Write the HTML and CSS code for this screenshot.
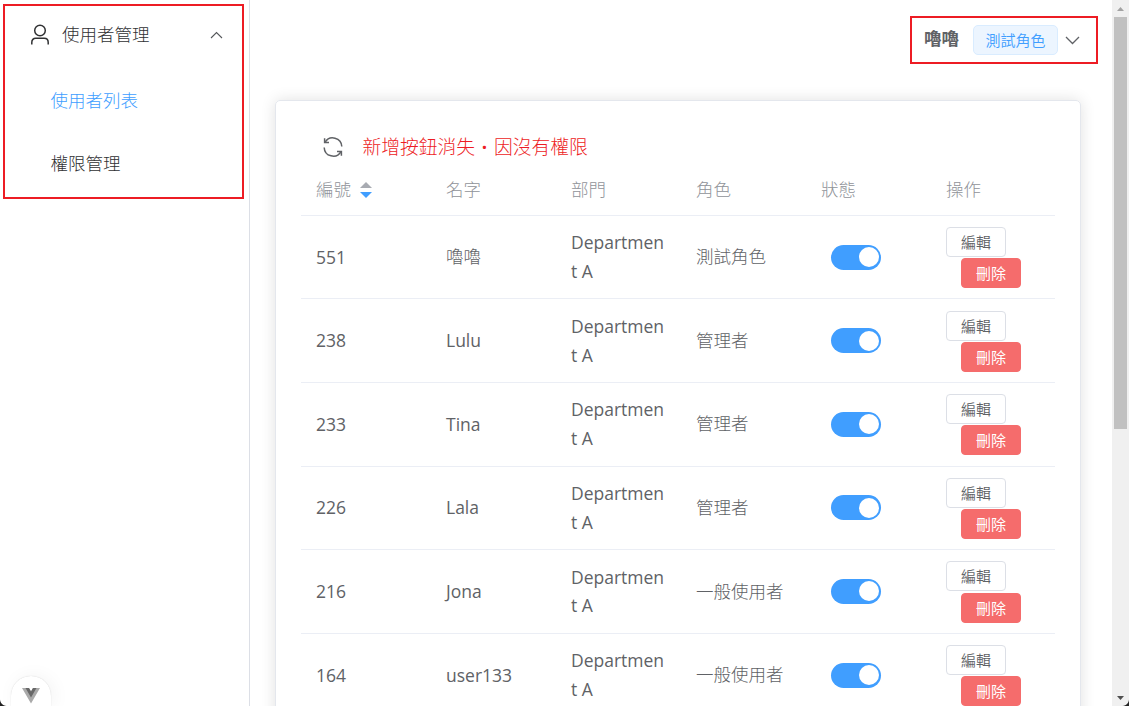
FILE: index.html
```html
<!DOCTYPE html>
<html lang="zh-Hant">
<head>
<meta charset="utf-8">
<title>使用者管理</title>
<link rel="stylesheet" href="styles.css">
</head>
<body>
<div class="app">
  <aside class="sidebar">
    <nav class="menu">
      <div class="menu-title">
        <svg class="icon-user" viewBox="0 0 20 22"><circle cx="10" cy="6.5" r="5.3"/><path d="M1.8 20.500v-2c0-2.800 1.500-4.200 4-4.200h8.400c2.500 0 4 1.400 4 4.200v2"/></svg>
        <span class="menu-label">使用者管理</span>
        <svg class="icon-up" viewBox="0 0 13 8"><path d="M1 7l5.500-5.500L12 7"/></svg>
      </div>
      <a class="menu-item active">使用者列表</a>
      <a class="menu-item">權限管理</a>
    </nav>
    <div class="devtools">
      <svg viewBox="0 0 18 16"><path class="vue-outer" d="M0 0h7l2 3.500L11 0h7L9 15.500z"/><path class="vue-inner" d="M3.500 0H7l2 3.500L11 0h3.500L9 9.500z"/></svg>
    </div>
  </aside>
  <main class="main">
    <header class="topbar">
      <div class="account">
        <b class="account-name">嚕嚕</b>
        <span class="tag">測試角色</span>
        <svg class="icon-down" viewBox="0 0 15 9"><path d="M1 1l6.500 6.500L14 1"/></svg>
      </div>
    </header>
    <section class="card">
      <div class="toolbar">
        <svg class="icon-refresh" viewBox="0 0 20 20"><path d="M1.600 1.200V5.600H6"/><path d="M2 5.400A9 9 0 0 1 18.800 9.600"/><path d="M18.400 18.800v-4.400H14"/><path d="M18 14.600A9 9 0 0 1 1.200 10.400"/></svg>
        <span class="notice">新增按鈕消失<i class="comma">·</i>因沒有權限</span>
      </div>
      <div class="row head">
        <div class="sortable">編號<svg class="icon-sort" viewBox="0 0 12 16"><path class="asc" d="M0 6L6 0l6 6z"/><path class="desc" d="M0 10l6 6 6-6z"/></svg></div>
        <div>名字</div><div>部門</div><div>角色</div><div>狀態</div><div>操作</div>
      </div>
      <div class="row"><div class="latin">551</div><div>嚕嚕</div><div class="latin">Department A</div><div>測試角色</div><div class="state"><span class="switch"></span></div><div class="actions"><button class="btn">編輯</button><button class="btn danger">刪除</button></div></div>
      <div class="row"><div class="latin">238</div><div class="latin">Lulu</div><div class="latin">Department A</div><div>管理者</div><div class="state"><span class="switch"></span></div><div class="actions"><button class="btn">編輯</button><button class="btn danger">刪除</button></div></div>
      <div class="row"><div class="latin">233</div><div class="latin">Tina</div><div class="latin">Department A</div><div>管理者</div><div class="state"><span class="switch"></span></div><div class="actions"><button class="btn">編輯</button><button class="btn danger">刪除</button></div></div>
      <div class="row"><div class="latin">226</div><div class="latin">Lala</div><div class="latin">Department A</div><div>管理者</div><div class="state"><span class="switch"></span></div><div class="actions"><button class="btn">編輯</button><button class="btn danger">刪除</button></div></div>
      <div class="row"><div class="latin">216</div><div class="latin">Jona</div><div class="latin">Department A</div><div>一般使用者</div><div class="state"><span class="switch"></span></div><div class="actions"><button class="btn">編輯</button><button class="btn danger">刪除</button></div></div>
      <div class="row"><div class="latin">164</div><div class="latin">user133</div><div class="latin">Department A</div><div>一般使用者</div><div class="state"><span class="switch"></span></div><div class="actions"><button class="btn">編輯</button><button class="btn danger">刪除</button></div></div>
    </section>
  </main>
  <div class="scrollbar">
    <svg viewBox="0 0 7 4"><path class="arrow-up" d="M0 4L3.500 0 7 4z"/></svg>
    <div class="thumb"></div>
    <svg class="at-end" viewBox="0 0 7 4"><path class="arrow-down" d="M0 0h7L3.500 4z"/></svg>
  </div>
  <i class="corner left"></i>
  <i class="corner right"></i>
  <div class="mark mark-menu"></div>
  <div class="mark mark-account"></div>
</div>
</body>
</html>
```
FILE: styles.css
```css
* { box-sizing: border-box; }
body {
  margin: 0;
  background: #fff;
  color: #606266;
  font: 300 17.500px/28.750px "Open Sans", "Noto Sans CJK TC", sans-serif;
}
.app { position: relative; display: flex; width: 1129px; height: 706px; overflow: hidden; }
svg { display: block; flex: none; fill: none; overflow: visible; }

.sidebar {
  display: flex; flex-direction: column; justify-content: space-between;
  width: 250px; height: 706px; flex: none;
  border-right: 1px solid #dcdfe6;
}
.menu { display: flex; flex-direction: column; color: #303133; }
.menu-title { display: flex; align-items: center; height: 70px; padding: 0 26px 0 30px; }
.icon-user { width: 20px; height: 22px; stroke: #303133; stroke-width: 1.500; }
.menu-label { margin-left: 12px; padding-bottom: 2px; flex: 1; }
.icon-up { width: 13px; height: 8px; stroke: #55575a; stroke-width: 1.100; }
.menu-item { display: flex; align-items: center; height: 62.500px; padding: 0 0 1px 50.500px; }
.menu-item.active { color: #409eff; }
.devtools {
  display: flex; justify-content: center;
  width: 40px; height: 30px; margin-left: 11px; padding-top: 12px;
  border-radius: 20px 20px 0 0;
  box-shadow: 0 0 1px rgba(0, 0, 0, .2), 3px 0 18px rgba(0, 0, 0, .05);
}
.devtools svg { width: 18px; height: 16px; }
.vue-outer { fill: #aaa; }
.vue-inner { fill: #686868; }

.main { flex: 1; padding: 0 31px 0 25px; }
.topbar { display: flex; justify-content: flex-end; align-items: center; height: 80px; margin-bottom: 20px; }
.account { display: flex; align-items: center; }
.account-name { padding-bottom: 3px; font-weight: 700; }
.tag {
  width: 85px; height: 30px; margin: 0 7px 0 14px;
  border: 1px solid #d9ecff; border-radius: 5px;
  background: #ecf5ff; color: #409eff;
  font-size: 15px; line-height: 28px; text-align: center; font-weight: 350;
}
.icon-down { width: 15px; height: 9px; margin-right: 1px; stroke: #606266; stroke-width: 1.300; }

.card {
  width: 806px; height: 640px; padding: 25px;
  border: 1px solid #e4e7ed; border-radius: 5px;
  box-shadow: 0 0 15px rgba(0, 0, 0, .12);
}
.toolbar { display: flex; align-items: center; height: 41px; padding-left: 21.500px; }
.icon-refresh { width: 20px; height: 20px; stroke: #606266; stroke-width: 1.500; }
.notice { margin-left: 20px; padding-top: 2px; color: #ed1c24; font-size: 18.750px; }
.comma { display: inline-block; width: 19px; text-align: center; font-style: normal; font-weight: 700; }

.row {
  display: grid; grid-template-columns: 130px repeat(4, 125px) 124px;
  align-items: center;
  height: 83.600px;
  border-bottom: 1px solid #ebeef5;
}
.row > div { padding: 0 15px 1px; word-break: break-all; }
.row > .latin { padding-bottom: 0; font-weight: 400; }
.row > .state { padding-bottom: 0; }
.head { height: 48.750px; color: #909399; }
.head > div { padding-bottom: 3px; }
.row > .sortable { display: flex; align-items: center; }
.icon-sort { width: 12px; height: 16px; margin: 2px 0 0 9px; }
.asc { fill: #a8abb2; }
.desc { fill: #409eff; }
.switch {
  display: flex; justify-content: flex-end; align-items: center;
  width: 50px; height: 25px; margin-left: 10px; padding-right: 2px;
  border-radius: 13px; background: #409eff;
}
.switch::after { content: ""; width: 20px; height: 20px; border-radius: 50%; background: #fff; }
.row > .actions { display: flex; flex-direction: column; gap: 1.250px; padding: 1.200px 0 0 15px; }
.btn {
  width: 60px; height: 30px; padding: 0;
  border: 1px solid #dcdfe6; border-radius: 4px;
  background: #fff; color: #606266;
  font: 350 15px/28px "Open Sans", "Noto Sans CJK TC", sans-serif;
}
.danger { margin-left: 15px; border-color: #f56c6c; background: #f56c6c; color: #fff; font-weight: 400; }

.scrollbar {
  display: flex; flex-direction: column; align-items: center;
  width: 17px; height: 706px; flex: none; padding: 7px 0 6px;
  background: #f0f0f0;
}
.scrollbar svg { width: 7px; height: 4px; }
.thumb { width: 13px; height: 412px; margin-top: 6px; background: #c1c1c1; }
.at-end { margin-top: auto; }
.arrow-up { fill: #a3a3a3; }
.arrow-down { fill: #505050; }

.mark { position: absolute; border: 2px solid #ed1c24; pointer-events: none; }
.mark-menu { left: 3px; top: 4px; width: 241px; height: 195px; }
.mark-account { left: 910px; top: 16px; width: 188px; height: 48px; }
.corner { position: absolute; bottom: 0; width: 7px; height: 7px; }
.corner.left { left: 0; background: radial-gradient(circle at 100% 0, transparent 6.500px, #222 7.500px); }
.corner.right { right: 0; background: radial-gradient(circle at 0 0, transparent 6.500px, #222 7.500px); }
```
